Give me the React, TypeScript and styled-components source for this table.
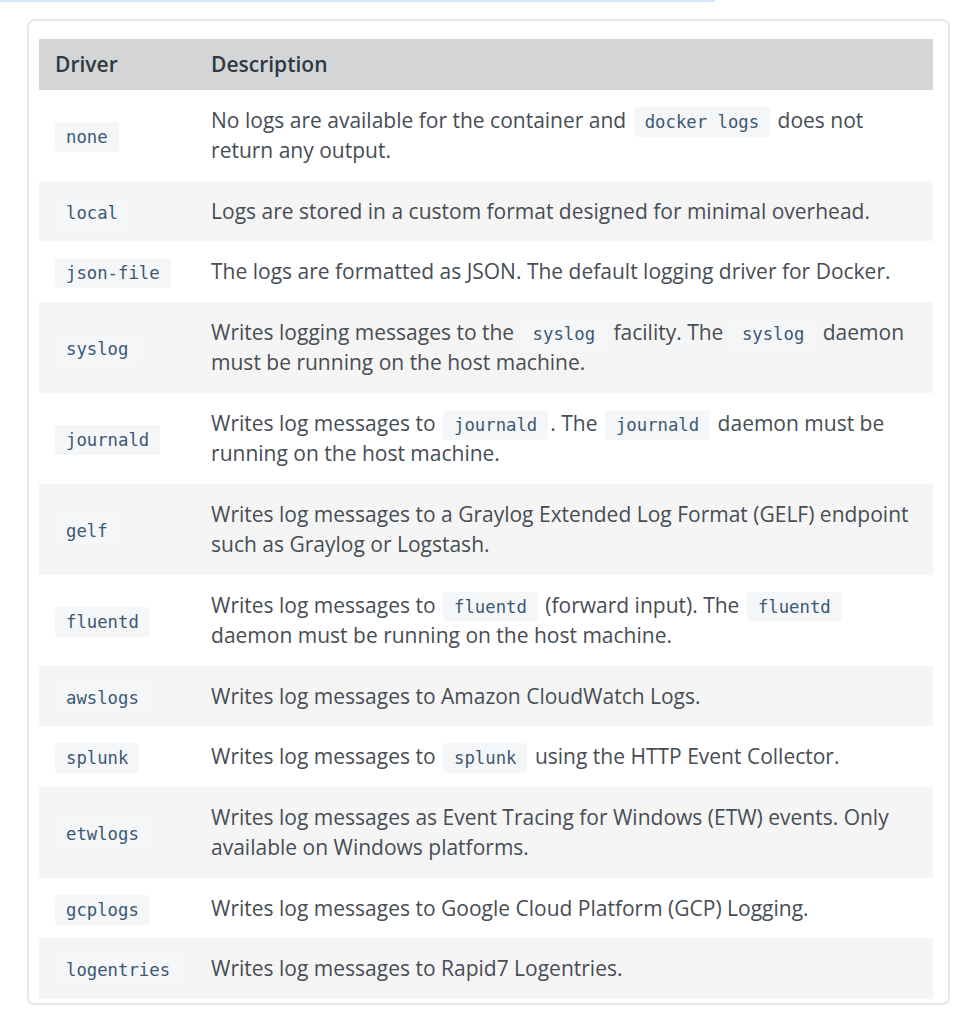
import React from "react";
import styled, { createGlobalStyle } from "styled-components";

const Global = createGlobalStyle`
  html, body { margin: 0; padding: 0; background: #ffffff; }
  body { font-family: "Open Sans", "Noto Sans", sans-serif; }
`;

const Page = styled.div`
  display: flex;
  flex-direction: column;
`;

const TopLine = styled.div`
  width: 715px;
  height: 2px;
  background: #d3e6fc;
`;

const Card = styled.div`
  margin: 17px 0 0 27px;
  width: 923px;
  border: 2px solid #e7e7e7;
  border-radius: 8px;
  padding: 18px 15px 4px 10px;
  box-sizing: border-box;
  box-shadow: 0 1px 2px rgba(0, 0, 0, 0.06);
`;

const Table = styled.table`
  width: 894px;
  border-collapse: collapse;
  font-family: "Open Sans", "Noto Sans", sans-serif;
  font-size: 21px;
  color: #474d54;
`;

const HeadCell = styled.th`
  text-align: left;
  font-weight: 600;
  color: #2f3942;
  background: #d4d5d6;
  padding: 10px 16px;
  line-height: 30.5px;
  &:first-child { width: 124px; padding-right: 14px; }
`;

const Row = styled.tr<{ $alt: boolean }>`
  background: ${(p) => (p.$alt ? "#f5f5f5" : "#ffffff")};
`;

const Cell = styled.td`
  padding: 15px 16px;
  line-height: 30.5px;
  vertical-align: middle;
  &:first-child { padding-right: 14px; }
`;

const Code = styled.code`
  font-family: "DejaVu Sans Mono", "Liberation Mono", monospace;
  font-size: 17.3px;
  line-height: 20px;
  color: #3c5874;
  background: #f4f6f8;
  border-radius: 4px;
  padding: 5px 11px;
  margin: 0 2px;
`;

const DriverCode = styled(Code)`
  margin: 0;
`;

type Part = string | { c: string };
const rows: { d: string; p: Part[] }[] = [
  { d: "none", p: ["No logs are available for the container and ", { c: "docker logs" }, " does not return any output."] },
  { d: "local", p: ["Logs are stored in a custom format designed for minimal overhead."] },
  { d: "json-file", p: ["The logs are formatted as JSON. The default logging driver for Docker."] },
  { d: "syslog", p: ["Writes logging messages to the ", { c: "syslog" }, " facility. The ", { c: "syslog" }, " daemon must be running on the host machine."] },
  { d: "journald", p: ["Writes log messages to ", { c: "journald" }, ". The ", { c: "journald" }, " daemon must be running on the host machine."] },
  { d: "gelf", p: ["Writes log messages to a Graylog Extended Log Format (GELF) endpoint such as Graylog or Logstash."] },
  { d: "fluentd", p: ["Writes log messages to ", { c: "fluentd" }, " (forward input). The ", { c: "fluentd" }, " daemon must be running on the host machine."] },
  { d: "awslogs", p: ["Writes log messages to Amazon CloudWatch Logs."] },
  { d: "splunk", p: ["Writes log messages to ", { c: "splunk" }, " using the HTTP Event Collector."] },
  { d: "etwlogs", p: ["Writes log messages as Event Tracing for Windows (ETW) events. Only available on Windows platforms."] },
  { d: "gcplogs", p: ["Writes log messages to Google Cloud Platform (GCP) Logging."] },
  { d: "logentries", p: ["Writes log messages to Rapid7 Logentries."] },
];

export default function App() {
  return (
    <Page>
      <Global />
      <TopLine />
      <Card>
        <Table>
          <thead>
            <tr>
              <HeadCell>Driver</HeadCell>
              <HeadCell>Description</HeadCell>
            </tr>
          </thead>
          <tbody>
            {rows.map((r, i) => (
              <Row key={r.d} $alt={i % 2 === 1}>
                <Cell>
                  <DriverCode>{r.d}</DriverCode>
                </Cell>
                <Cell>
                  {r.p.map((part, j) =>
                    typeof part === "string" ? (
                      <React.Fragment key={j}>{part}</React.Fragment>
                    ) : (
                      <Code key={j}>{part.c}</Code>
                    )
                  )}
                </Cell>
              </Row>
            ))}
          </tbody>
        </Table>
      </Card>
    </Page>
  );
}
